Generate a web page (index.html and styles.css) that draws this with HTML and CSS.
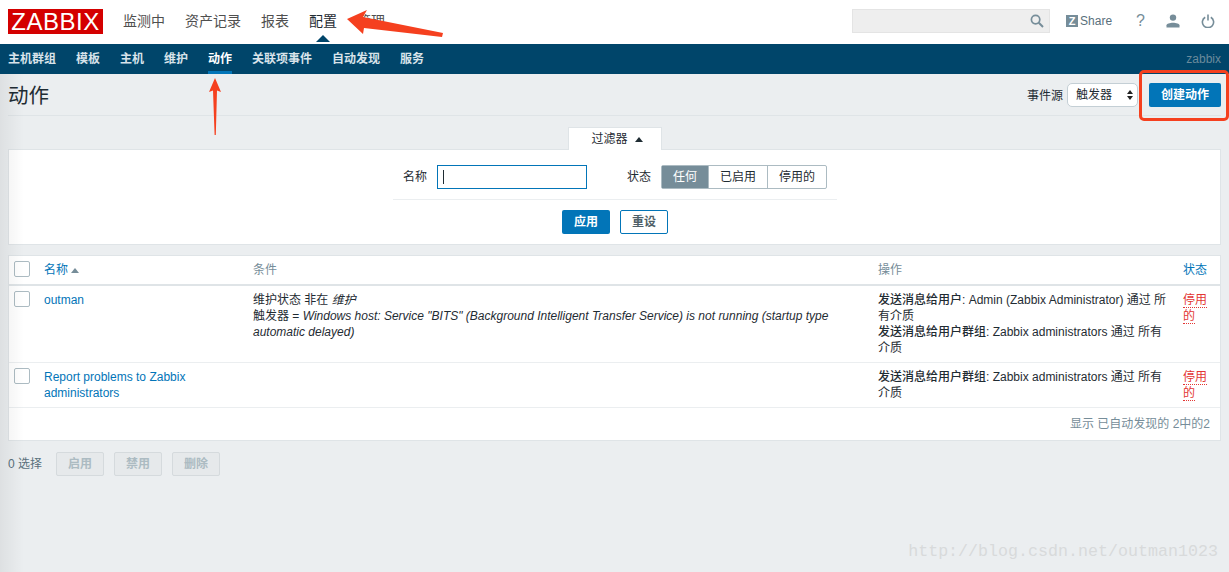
FILE: index.html
```html
<!DOCTYPE html>
<html lang="zh-CN">
<head>
  <meta charset="UTF-8" />
  <title>动作 - Zabbix</title>
  <link rel="stylesheet" href="styles.css">
</head>
<body>

<header class="topbar">
  <div class="logo">ZABBIX</div>
  <nav class="mainnav">
    <a href="#">监测中</a>
    <a href="#">资产记录</a>
    <a href="#">报表</a>
    <a href="#" class="current">配置</a>
    <a href="#">管理</a>
  </nav>
  <div class="topright">
    <div class="search">
      <svg width="14" height="14" viewBox="0 0 14 14"><circle cx="5.6" cy="5.6" r="4.2" fill="none" stroke="#768d99" stroke-width="1.7"/><path d="M8.8 8.8L13 13" stroke="#768d99" stroke-width="2"/></svg>
    </div>
    <a href="#" class="share"><span class="zbox">Z</span>Share</a>
    <a href="#" class="help">?</a>
    <a href="#" class="topicon">
      <svg width="14" height="14" viewBox="0 0 14 14"><circle cx="7" cy="3.6" r="3.2" fill="#768d99"/><path d="M0.5 13.5v-2.2c0-1.6 3.4-2.6 6.5-2.6s6.5 1 6.5 2.6v2.2z" fill="#768d99"/></svg>
    </a>
    <a href="#" class="topicon">
      <svg width="14" height="14" viewBox="0 0 14 14"><path d="M4.2 3.2a5.6 5.6 0 1 0 5.6 0" fill="none" stroke="#768d99" stroke-width="1.6"/><path d="M7 0.5v6" stroke="#768d99" stroke-width="1.6"/></svg>
    </a>
  </div>
</header>

<nav class="subnav">
  <a href="#">主机群组</a>
  <a href="#">模板</a>
  <a href="#">主机</a>
  <a href="#">维护</a>
  <a href="#" class="current">动作</a>
  <a href="#">关联项事件</a>
  <a href="#">自动发现</a>
  <a href="#">服务</a>
  <span class="server">zabbix</span>
</nav>

<main class="content">
  <div class="pagehead">
    <h1>动作</h1>
    <div class="headctl">
      <label>事件源</label>
      <div class="select">触发器<span class="updown"><i class="up"></i><i class="down"></i></span></div>
      <button class="btn primary create">创建动作</button>
    </div>
  </div>

  <div class="filtertabwrap">
    <div class="filtertab">过滤器<i class="tri"></i></div>
  </div>
  <section class="filter">
    <div class="filterrow">
      <label>名称</label>
      <div class="textinput"><span class="caret"></span></div>
      <label class="statelabel">状态</label>
      <div class="radios">
        <span class="on">任何</span><span>已启用</span><span>停用的</span>
      </div>
    </div>
    <div class="filterbtns">
      <button class="btn primary">应用</button>
      <button class="btn outline">重设</button>
    </div>
  </section>

  <section class="listbox">
    <table>
      <thead>
        <tr>
          <th class="c-check"><span class="check"></span></th>
          <th class="c-name"><a href="#">名称</a><i class="sort"></i></th>
          <th class="c-cond">条件</th>
          <th class="c-op">操作</th>
          <th class="c-state"><a href="#">状态</a></th>
        </tr>
      </thead>
      <tbody>
        <tr>
          <td><span class="check"></span></td>
          <td><a href="#">outman</a></td>
          <td>维护状态 非在 <em>维护</em><br>触发器 = <em>Windows host: Service "BITS" (Background Intelligent Transfer Service) is not running (startup type automatic delayed)</em></td>
          <td><b>发送消息给用户:</b> Admin (Zabbix Administrator) 通过 所有介质<br><b>发送消息给用户群组:</b> Zabbix administrators 通过 所有介质</td>
          <td><a href="#" class="off">停用的</a></td>
        </tr>
        <tr>
          <td><span class="check"></span></td>
          <td><a href="#">Report problems to Zabbix administrators</a></td>
          <td></td>
          <td><b>发送消息给用户群组:</b> Zabbix administrators 通过 所有介质</td>
          <td><a href="#" class="off">停用的</a></td>
        </tr>
      </tbody>
    </table>
    <div class="tablefoot">显示 已自动发现的 2中的2</div>
  </section>

  <div class="actionbar">
    <span class="selected">0 选择</span>
    <button class="btn disabled">启用</button>
    <button class="btn disabled">禁用</button>
    <button class="btn disabled">删除</button>
  </div>
</main>

<!-- annotations drawn over the screenshot -->
<svg class="arrow arrow-top" width="100" height="30" viewBox="0 0 100 30">
  <path d="M1 10L21 1L17 8L97 24L96 28L18 19L17 25z" fill="#f5401f"/>
</svg>
<svg class="arrow arrow-side" width="14" height="58" viewBox="0 0 14 58">
  <path d="M7 0L13 14L9 12.500L7.800 57H6.600L5 12.500L1 14z" fill="#f5401f"/>
</svg>
<div class="redbox"></div>
<div class="edgeshade"></div>
<div class="watermark">http://blog.csdn.net/outman1023</div>

</body>
</html>
```
FILE: styles.css
```css
* {
  box-sizing: border-box;
}
html, body {
  margin: 0;
  height: 100%;
}
body {
  position: relative;
  overflow: hidden;
  background-color: #ebeef0;
  color: #1f2c33;
  font-family: "Liberation Sans", "Noto Sans CJK SC", sans-serif;
  font-size: 12px;
  line-height: 16px;
}
a {
  color: inherit;
  text-decoration: none;
}

/* top bar */
.topbar {
  display: flex;
  align-items: center;
  height: 44px;
  background-color: #fff;
  padding: 0 8px;
}
.logo {
  width: 95px;
  height: 25px;
  margin-top: -1px;
  background-color: #d40000;
  color: #fff;
  font-size: 24px;
  line-height: 25px;
  text-align: center;
  letter-spacing: 0.5px;
}
.mainnav {
  display: flex;
  gap: 20px;
  margin-left: 20px;
  margin-top: -2px;
  font-size: 14px;
  color: #4f4f4f;
}
.mainnav a {
  position: relative;
}
.mainnav .current {
  color: #1f2c33;
}
.mainnav .current::after {
  content: "";
  position: absolute;
  left: 50%;
  bottom: -13px;
  margin-left: -7px;
  border: 7px solid transparent;
  border-top: 0;
  border-bottom-color: #00456a;
}
.topright {
  display: flex;
  align-items: center;
  margin-left: auto;
  margin-top: -3px;
  margin-right: 6px;
  color: #768d99;
}
.search {
  display: flex;
  align-items: center;
  justify-content: flex-end;
  width: 198px;
  height: 24px;
  padding-right: 5px;
  background-color: #eeeeee;
  border: 1px solid #e4e4e4;
}
.share {
  display: flex;
  align-items: center;
  margin-left: 16px;
  color: #59707c;
}
.zbox {
  width: 12px;
  height: 12px;
  margin-right: 2px;
  background-color: #768d99;
  color: #fff;
  font-size: 11px;
  font-weight: bold;
  line-height: 12px;
  text-align: center;
}
.help {
  margin-left: 24px;
  font-size: 16px;
}
.topicon {
  display: flex;
  margin-left: 21px;
}

/* second level menu */
.subnav {
  display: flex;
  align-items: stretch;
  gap: 20px;
  height: 30px;
  padding: 0 8px;
  background-color: #00456a;
  color: #d8e3ea;
  font-weight: bold;
}
.subnav a {
  padding-top: 7px;
}
.subnav .current {
  color: #fff;
  border-bottom: 3px solid #0275b8;
}
.server {
  margin-left: auto;
  padding-top: 7px;
  color: #6b8b9c;
  font-weight: normal;
}

/* page */
.content {
  padding: 0 8px;
}
.pagehead {
  display: flex;
  align-items: center;
  justify-content: space-between;
  height: 42px;
  padding-top: 1px;
  border-bottom: 1px solid #dfe4e7;
}
h1 {
  margin: 2px 0 0;
  font-size: 20.500px;
  font-weight: normal;
  line-height: 24px;
}
.headctl {
  display: flex;
  align-items: center;
}
.headctl label {
  margin: 1px 4px 0 0;
}
.select {
  display: flex;
  align-items: center;
  justify-content: space-between;
  width: 71px;
  height: 24px;
  padding: 0 4px 0 8px;
  background-color: #fff;
  border: 1px solid #c4cfd5;
  border-radius: 5px;
}
.updown {
  display: flex;
  flex-direction: column;
  gap: 2px;
}
.updown i {
  border: 3px solid transparent;
  border-top: 0;
  border-bottom: 4px solid #222;
}
.updown .down {
  border-bottom: 0;
  border-top: 4px solid #222;
}
.btn {
  height: 24px;
  padding: 0 10px;
  border: 1px solid transparent;
  border-radius: 2px;
  font: inherit;
  font-weight: bold;
}
.primary {
  background-color: #0275b8;
  color: #fff;
}
.create {
  width: 72px;
  padding: 0;
  margin-left: 11px;
}
.outline {
  background-color: #fff;
  border-color: #0275b8;
  color: #4f5f68;
}
.disabled {
  background-color: #e6e9eb;
  border-color: #d5dadd;
  color: #acbbc2;
}

/* filter */
.filtertabwrap {
  display: flex;
  justify-content: center;
  margin-top: 11px;
}
.filtertab {
  display: flex;
  align-items: center;
  justify-content: center;
  width: 94px;
  height: 23px;
  margin-bottom: -1px;
  padding-left: 5px;
  background-color: #fff;
  border: 1px solid #dfe4e7;
  border-bottom: 0;
  position: relative;
}
.tri {
  margin-left: 7px;
  border: 4px solid transparent;
  border-top: 0;
  border-bottom: 5px solid #1f2c33;
}
.filter {
  height: 96px;
  background-color: #fff;
  border: 1px solid #dfe4e7;
}
.filterrow {
  display: flex;
  align-items: center;
  width: 444px;
  height: 50px;
  margin-left: 384px;
  padding: 4px 0 0 10px;
  border-bottom: 1px solid #ebeef0;
}
.textinput {
  width: 150px;
  height: 24px;
  margin-left: 10px;
  padding: 4px 5px;
  border: 1px solid #0275b8;
}
.caret {
  display: block;
  width: 1px;
  height: 14px;
  background-color: #1f2c33;
}
.statelabel {
  margin-left: 40px;
}
.radios {
  display: flex;
  margin-left: 10px;
  height: 24px;
  border: 1px solid #acbbc2;
  border-radius: 2px;
}
.radios span {
  padding: 3px 11px;
  border-left: 1px solid #acbbc2;
}
.radios span:first-child {
  border-left: 0;
}
.radios .on {
  background-color: #768d99;
  color: #fff;
}
.filterbtns {
  display: flex;
  justify-content: center;
  gap: 10px;
  margin-top: 10px;
  padding-left: 1px;
}
.filterbtns .btn {
  width: 48px;
  padding: 0;
}

/* table */
.listbox {
  margin-top: 10px;
  background-color: #fff;
  border: 1px solid #dfe4e7;
}
table {
  width: 100%;
  border-collapse: collapse;
  table-layout: fixed;
}
th {
  height: 29px;
  padding: 0 5px;
  text-align: left;
  font-weight: normal;
  color: #768d99;
  border-bottom: 2px solid #dfe4e7;
}
th a {
  color: #0275b8;
}
td {
  padding: 6px 5px;
  vertical-align: top;
  border-bottom: 1px solid #ebeef0;
}
td a {
  color: #0275b8;
}
td b {
  font-weight: 500;
}
.c-check {
  width: 30px;
}
.c-name {
  width: 209px;
}
.c-cond {
  width: 625px;
}
.c-op {
  width: 305px;
}
.c-state {
  width: 42px;
}
th.c-check {
  padding-bottom: 2px;
}
.check {
  display: block;
  width: 16px;
  height: 16px;
  background-color: #fff;
  border: 1px solid #acbbc2;
  border-radius: 2px;
}
td .check {
  margin-top: -1px;
}
.sort {
  display: inline-block;
  margin-left: 3px;
  vertical-align: 1px;
  border: 4px solid transparent;
  border-top: 0;
  border-bottom: 5px solid #768d99;
}
.off {
  color: #e33734;
  border-bottom: 1px dotted #e33734;
}
.tablefoot {
  height: 32px;
  padding: 8px 10px 0 0;
  text-align: right;
  color: #768d99;
}
.actionbar {
  display: flex;
  align-items: center;
  margin-top: 11px;
}
.selected {
  color: #59707c;
  margin-right: 14px;
}
.actionbar .btn {
  width: 48px;
  padding: 0;
  margin-right: 10px;
}

/* annotations */
.arrow {
  position: absolute;
}
.arrow-top {
  left: 346px;
  top: 9px;
}
.arrow-side {
  left: 208px;
  top: 78px;
}
.redbox {
  position: absolute;
  left: 1139px;
  top: 70px;
  width: 90px;
  height: 51px;
  border: 3px solid #f5401f;
  border-radius: 5px;
}
.edgeshade {
  position: absolute;
  left: 0;
  top: 74px;
  bottom: 0;
  width: 24px;
  background: linear-gradient(to right, rgba(0, 0, 0, 0.06), rgba(0, 0, 0, 0));
}
.watermark {
  position: absolute;
  right: 11px;
  top: 541px;
  font-family: "Liberation Mono", monospace;
  font-size: 16.670px;
  line-height: 22px;
  color: #d8dadb;
}
```
